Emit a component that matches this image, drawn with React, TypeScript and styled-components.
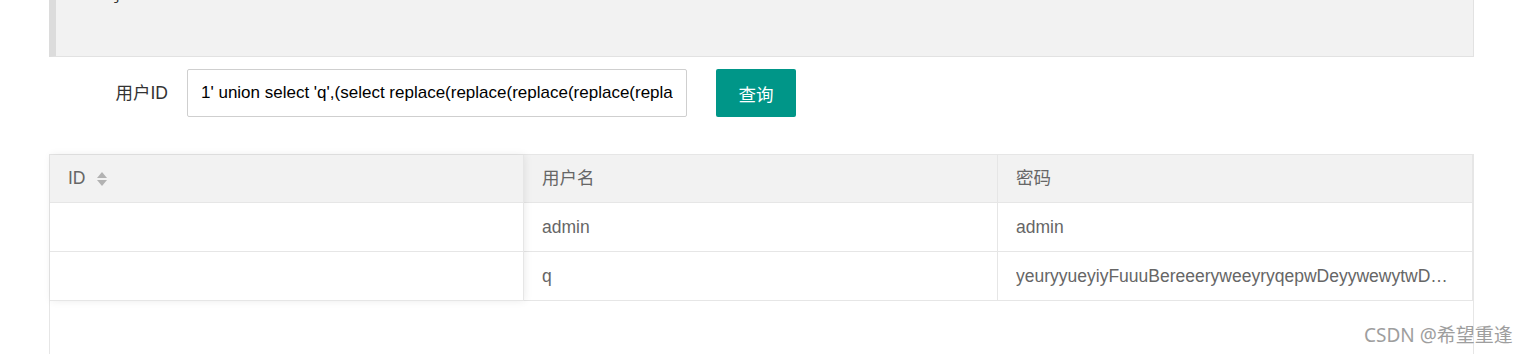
import React from "react";
import styled, { createGlobalStyle } from "styled-components";

const GlobalStyle = createGlobalStyle`
  html, body { margin: 0; padding: 0; background: #fff; }
  body {
    font-family: "Liberation Sans", Arial, "Noto Sans CJK SC", sans-serif;
    overflow: hidden;
  }
`;

const Page = styled.div`
  position: relative;
  width: 1531px;
  height: 354px;
  box-sizing: border-box;
  padding-left: 49px;
  overflow: hidden;
`;

const Content = styled.div`
  width: 1425px;
`;

const CodeBlock = styled.div`
  box-sizing: border-box;
  height: 57px;
  background: #f2f2f2;
  border: 1px solid #e2e2e2;
  border-top: none;
  border-left: 7px solid #dcdcdc;
  overflow: hidden;
`;

const CodeText = styled.pre`
  margin: -16px 0 0 0;
  padding: 0 12px;
  font-family: "Liberation Mono", "Courier New", monospace;
  font-size: 15px;
  line-height: 25px;
  color: #333;
  white-space: pre;
`;

const FormRow = styled.div`
  display: flex;
  align-items: center;
  margin-top: 12px;
  padding-left: 38px;
  height: 48px;
`;

const Label = styled.label`
  box-sizing: border-box;
  width: 100px;
  padding-right: 19px;
  text-align: right;
  font-size: 17.5px;
  color: #333;
  line-height: 48px;
`;

const Input = styled.input`
  box-sizing: border-box;
  width: 500px;
  height: 48px;
  padding: 0 13px;
  border: 1px solid #cfcfcf;
  border-radius: 2px;
  background: #fff;
  font-family: "Liberation Sans", Arial, "Noto Sans CJK SC", sans-serif;
  font-size: 17px;
  color: #000;
  outline: none;
`;

const Button = styled.button`
  box-sizing: border-box;
  margin-left: 29px;
  width: 80px;
  height: 48px;
  padding: 0;
  border: none;
  border-radius: 2px;
  background: #009688;
  color: #fff;
  font-family: "Liberation Sans", Arial, "Noto Sans CJK SC", sans-serif;
  font-size: 17.5px;
  cursor: pointer;
`;

const Table = styled.div`
  margin-top: 37px;
  box-sizing: border-box;
  height: 240px;
  border: 1px solid #e6e6e6;
  border-bottom: none;
  display: flex;
  align-items: flex-start;
  background: #fff;
`;

const FixedCol = styled.div`
  position: relative;
  z-index: 1;
  width: 474px;
  flex: none;
  background: #fff;
  box-shadow: 1px 0 8px rgba(0, 0, 0, 0.08);
`;

const MainCols = styled.div`
  flex: 1;
  min-width: 0;
`;

const Row = styled.div`
  display: grid;
  grid-template-columns: 474px 1fr;
`;

const Cell = styled.div<{ $head?: boolean }>`
  box-sizing: border-box;
  height: ${(p) => (p.$head ? 48 : 49)}px;
  padding: 0 18px;
  border-right: 1px solid #e6e6e6;
  border-bottom: 1px solid #e6e6e6;
  background: ${(p) => (p.$head ? "#f2f2f2" : "#fff")};
  color: #666;
  font-size: 17.5px;
  line-height: ${(p) => (p.$head ? 47 : 48)}px;
  white-space: nowrap;
  overflow: hidden;
  display: flex;
  align-items: center;
`;

const CellText = styled.span`
  overflow: hidden;
  text-overflow: ellipsis;
  white-space: nowrap;
`;

const SortIcon = styled.span`
  display: inline-flex;
  flex-direction: column;
  gap: 2px;
  margin-left: 11px;
`;

const Tri = styled.span<{ $down?: boolean }>`
  width: 0;
  height: 0;
  border-left: 5px solid transparent;
  border-right: 5px solid transparent;
  ${(p) =>
    p.$down
      ? "border-top: 6px solid #b2b2b2;"
      : "border-bottom: 6px solid #b2b2b2;"}
`;

const Watermark = styled.div`
  position: absolute;
  left: 1364px;
  top: 322px;
  font-family: "Noto Sans", "Noto Sans CJK SC", sans-serif;
  font-size: 19px;
  line-height: 26px;
  color: #9e9e9e;
  text-shadow: 0 0 2px #fff;
  white-space: nowrap;
`;

const rows = [
  { name: "admin", pwd: "admin" },
  {
    name: "q",
    pwd: "yeuryyueyiyFuuuBereeeryweeyryqepwDeyywewytwDqewrtyuFeyyqrw",
  },
];

export default function App() {
  return (
    <>
      <GlobalStyle />
      <Page>
        <Content>
          <CodeBlock>
            <CodeText>{"     }\n"}</CodeText>
          </CodeBlock>
          <FormRow>
            <Label>用户ID</Label>
            <Input
              readOnly
              defaultValue="1' union select 'q',(select replace(replace(replace(replace(replace(replace(password,'a','b'),'c','d'),'e','f'),'g','h'),'i','j'),'k','l') from users limit 1)#"
            />
            <Button>查询</Button>
          </FormRow>
          <Table>
            <FixedCol>
              <Cell $head>
                ID
                <SortIcon>
                  <Tri />
                  <Tri $down />
                </SortIcon>
              </Cell>
              {rows.map((r, i) => (
                <Cell key={i} />
              ))}
            </FixedCol>
            <MainCols>
              <Row>
                <Cell $head>用户名</Cell>
                <Cell $head>密码</Cell>
              </Row>
              {rows.map((r, i) => (
                <Row key={i}>
                  <Cell>{r.name}</Cell>
                  <Cell>
                    <CellText>{r.pwd}</CellText>
                  </Cell>
                </Row>
              ))}
            </MainCols>
          </Table>
        </Content>
        <Watermark>CSDN @希望重逢</Watermark>
      </Page>
    </>
  );
}
